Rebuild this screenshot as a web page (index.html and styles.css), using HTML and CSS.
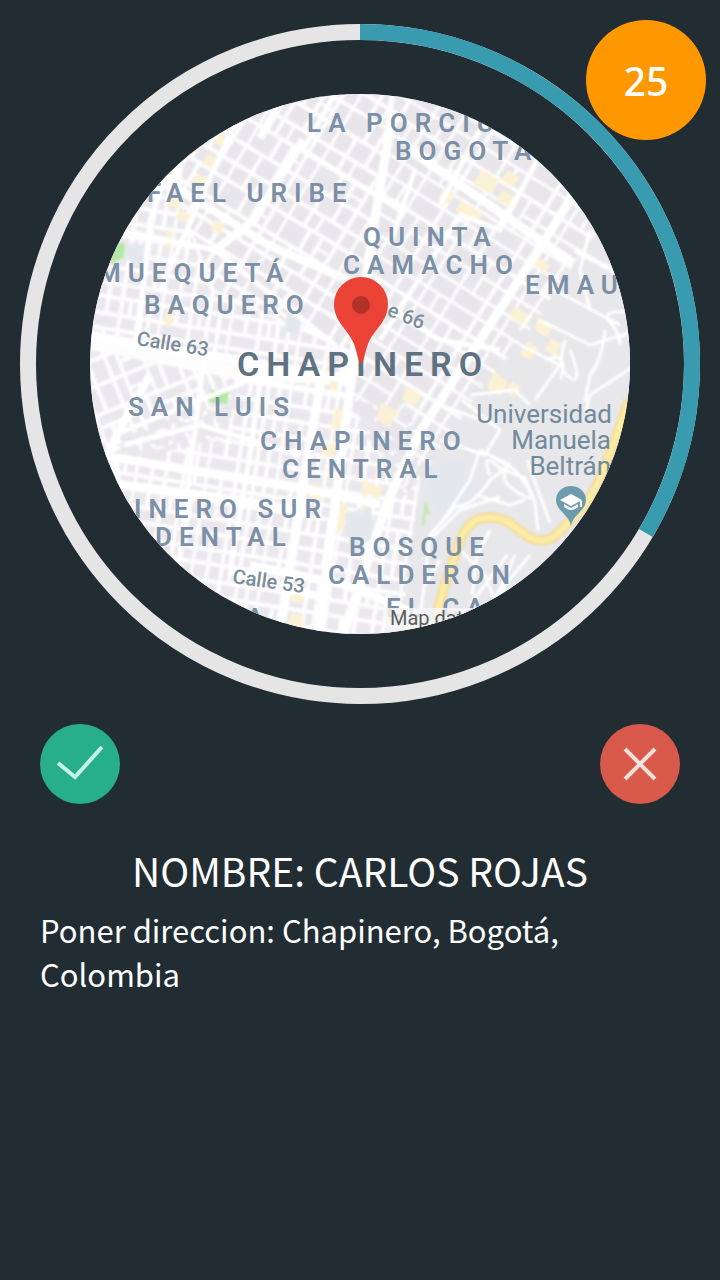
FILE: index.html
```html
<!DOCTYPE html>
<html lang="es">
<head>
<meta charset="utf-8">
<meta name="viewport" content="width=device-width, initial-scale=1">
<title>Solicitud de servicio</title>
<link rel="stylesheet" href="styles.css">
</head>
<body>
<main class="request">
  <section class="dial">
    <svg class="dial-graphic" viewBox="20 24 680 680" role="img" aria-label="Mapa de Chapinero">
      <defs>
        <clipPath id="map-clip"><circle cx="360" cy="364" r="270"/></clipPath>
        <pattern id="grid-nw" width="72" height="63" patternUnits="userSpaceOnUse" patternTransform="rotate(31)">
          <g fill="#e9e6eb"><path d="M0 0h15v17H0zM19 0h18v17H19zM41 0h12v17H41zM57 0h12v17H57zM0 21h15v14H0zM19 21h9v14h-9zM31 21h22v14H31zM57 21h12v14H57zM0 39h23v20H0zM27 39h10v20H27zM41 39h12v9H41zM41 51h12v8H41zM57 39h12v20H57z"/></g>
        </pattern>
        <pattern id="grid-w" width="70" height="62" patternUnits="userSpaceOnUse" patternTransform="rotate(9)">
          <g fill="#ebe8ed"><path d="M0 0h12v12H0zM16 0h10v12H16zM30 0h14v12H30zM48 0h7v12h-7zM59 0h8v12h-8zM0 16h12v10H0zM16 16h10v10H16zM30 16h14v10H30zM48 16h19v10H48zM0 30h12v13H0zM16 30h10v13H16zM30 30h5v13h-5zM39 30h5v13h-5zM48 30h7v13h-7zM59 30h8v13h-8zM0 47h26v11H0zM30 47h14v11H30zM48 47h7v11h-7zM59 47h8v11h-8z"/></g>
        </pattern>
        <pattern id="grid-e" width="86" height="74" patternUnits="userSpaceOnUse" patternTransform="rotate(32)">
          <g fill="#e8e6ea"><path d="M0 0h24v15H0zM27 0h28v15H27zM59 0h24v15H59zM0 18h11v16H0zM14 18h10v16H14zM27 18h28v16H27zM59 18h24v16H59zM0 38h24v14H0zM27 38h12v33H27zM42 38h13v14H42zM59 38h11v14H59zM73 38h10v14H73zM0 55h24v16H0zM42 55h13v16H42zM59 55h24v16H59z"/></g>
        </pattern>
        <pattern id="grid-sw" width="66" height="66" patternUnits="userSpaceOnUse" patternTransform="rotate(-22)">
          <g fill="#ebe8ed"><path d="M0 0h9v24H0zM13 0h14v24H13zM31 0h8v24h-8zM43 0h20v11H43zM43 14h20v10H43zM0 28h27v9H0zM31 28h8v9h-8zM43 28h8v20h-8zM55 28h8v20h-8zM0 41h9v21H0zM13 41h14v21H13zM31 41h8v21h-8zM43 52h20v10H43z"/></g>
        </pattern>
      </defs>

      <circle class="ring-track" cx="360" cy="364" r="332"/>
      <path class="ring-progress" d="M360 32A332 332 0 0 1 645.8 533"/>

      <g clip-path="url(#map-clip)">
        <rect x="90" y="94" width="540" height="540" fill="#fefdfe"/>
        <g class="streets">
          <path fill="url(#grid-nw)" d="M190 90H390L374 230L350 350L215 290L180 200Z"/>
          <path fill="url(#grid-w)" d="M90 190H176L210 290L345 350L335 382L90 330Z"/>
          <path fill="url(#grid-sw)" d="M90 350L240 380L225 440L120 460L90 470Z"/>
          <path fill="url(#grid-w)" d="M240 380L350 386L318 640H120V440Z"/>
          <path fill="url(#grid-w)" d="M330 400L410 400L440 640H310Z"/>
          <path fill="url(#grid-e)" d="M396 90H640V340L540 340L470 430L400 500L345 390L375 240Z"/>
          <path fill="#e8e7ea" d="M640 190V640H400L420 480L480 390L530 330L590 240Z"/>
          <path fill="#e3e8ec" d="M432 467L462 461L477 491L445 516L425 497ZM126 243L150 246L148 262L124 260ZM287 314L302 317L299 335L284 331ZM344 515L371 505L376 540L350 545Z"/>

          <g fill="#fbf2d6">
            <path d="M482 169L500 180L491 195L473 185ZM461 200L483 213L478 222L455 210ZM508 170L520 178L512 187L501 180ZM446 188L455 194L448 204L438 198ZM503 190L514 197L508 207L496 199ZM220 134L228 140L223 148L214 143ZM208 154L219 159L213 169L202 164ZM197 173L210 179L204 187L192 182ZM169 196L181 199L179 208L168 206Z"/>
            <path d="M167 230L174 231L171 249L165 247ZM154 264L160 265L158 283L152 281ZM166 310L174 311L172 326L164 325ZM178 210L194 216L189 223L176 219ZM215 220L226 225L220 235L211 229ZM514 306L532 317L526 327L509 317ZM538 317L553 326L547 338L535 330ZM551 338L562 344L556 357L545 350ZM527 342L540 349L530 360L520 354ZM538 257L550 266L545 273L532 264Z"/>
            <path d="M330 380L339 382L335 398L329 395ZM335 409L351 411L345 430L331 428ZM322 442L337 444L334 458L321 455ZM310 484L324 486L322 501L309 498ZM336 501L348 506L343 533L334 529ZM292 594L305 596L303 603L290 602ZM290 614L303 615L301 635L286 634ZM494 372L508 382L500 396L487 388ZM512 381L521 388L515 398L505 391ZM380 403L399 412L389 427L377 420ZM407 386L422 395L415 407L402 399ZM363 480L383 488L379 500L368 494L361 518Z"/>
          </g>
          <path fill="#b5e8a5" d="M111 243H125L124 257L110 264ZM211 390L229 392L227 404L208 402Z"/>

          <g class="road">
            <path stroke-width="9" d="M410 150L573 263M582 180L545 240L478 343L423 427L387 503L340 645M393 110L373 230L350 390L318 640M321 380L302 490L278 640"/>
            <path stroke-width="8" d="M180 190L270 246L375 292M303 140L254 220L215 250M300 70L260 138M90 336L240 360L345 378M100 455L200 472L310 490L380 505M90 480L240 500L310 512M250 565L345 585L420 615M150 375L117 434L104 466M230 570L330 600"/>
            <path stroke-width="5" d="M196 90L150 220L138 340M245 100L160 290M335 94L303 150L400 210M120 230L215 250L335 345M375 300L440 340L500 350M415 170L390 245M540 155L500 230L460 215L380 340M480 130L440 205M575 250L640 285M260 380L250 455L230 570M117 434L250 380L345 395M124 445L200 425L300 455M205 350L190 470L175 600"/>
          </g>
          <g class="road hills" stroke-width="3">
            <path d="M570 255L555 280L520 330M590 230L580 270L590 310M545 285L620 325M540 320L590 345L640 330M520 345L560 365L535 400M545 360Q570 350 560 379M565 340Q556 370 570 378T570 350M625 312Q600 310 610 322T620 345M640 362L590 395L586 412M605 330Q602 360 590 375L585 402"/>
            <path d="M470 395L515 390L530 405M462 400L500 430L485 455L440 440M440 405L478 419M490 455L510 465L490 480Q475 505 455 507L430 535L420 620M480 450L470 480L440 525M490 475Q480 450 500 468L525 478L535 502L538 530M510 463Q495 480 520 494T515 470L480 450M527 460L550 523M475 495L510 505L525 500M430 540L460 510L500 497M490 530L477 555L472 595M515 555L495 600M507 555L470 605M460 550L485 575L495 600M440 560L425 585M530 555L505 585L490 620"/>
          </g>
          <path class="highway-edge" d="M436 620L443 590L457 550Q463 528 476 520Q491 514 508 522L530 538Q545 544 555 536L574 517Q592 499 600 478L615 440L629 400"/>
          <path class="highway" d="M436 620L443 590L457 550Q463 528 476 520Q491 514 508 522L530 538Q545 544 555 536L574 517Q592 499 600 478L615 440L629 400"/>
          <path d="M426 503L423 525M427 508L429 515" fill="none" stroke="#b5e8a5" stroke-width="2"/>
        </g>

        <g class="district">
          <text x="307" y="132">LA PORCIÚN</text>
          <text x="395" y="160">BOGOTÁ</text>
          <text x="147" y="202">FAEL URIBE</text>
          <text x="363" y="246">QUINTA</text>
          <text x="343" y="274">CAMACHO</text>
          <text x="525" y="294">EMAUS</text>
          <text x="98" y="282">MUEQUETÁ</text>
          <text x="144" y="314">BAQUERO</text>
          <text x="128" y="416">SAN LUIS</text>
          <text x="260" y="450">CHAPINERO</text>
          <text x="282" y="478">CENTRAL</text>
          <text x="134" y="518">INERO SUR</text>
          <text x="155" y="546">DENTAL</text>
          <text x="349" y="556">BOSQUE</text>
          <text x="328" y="584">CALDERON</text>
          <text x="386" y="617">EL CA</text>
          <text x="246" y="627">A</text>
        </g>
        <text class="locality" x="237" y="376">CHAPINERO</text>

        <g class="street-name">
          <text transform="translate(136 345) rotate(9)">Calle 63</text>
          <text transform="translate(232 583) rotate(8)">Calle 53</text>
          <text transform="translate(386 315) rotate(22)">e 66</text>
        </g>
        <g class="poi">
          <text x="612" y="423">Universidad</text>
          <text x="611" y="449">Manuela</text>
          <text x="611" y="475">Beltrán</text>
        </g>
        <path fill="#6d9cae" d="M571 526C569 514 556 511 556 500A15 14 0 0 1 586 500C586 511 573 514 571 526Z"/>
        <path fill="#fff" d="M571 494L582 500L571 506L560 500ZM564 504V507Q571 513 578 507V504L571 508ZM580 501H582V507H580Z"/>

        <rect x="386" y="608" width="250" height="30" fill="#f4f4f5" opacity=".85"/>
        <text class="attribution" x="390" y="625">Map data</text>

        <path fill="#ea4335" d="M361 363C358 363 358 355 354 344C348 329 334 322 334 304A27 27 0 0 1 388 304C388 322 374 329 368 344C364 355 364 363 361 363Z"/>
        <circle cx="361" cy="305" r="9" fill="#b23128"/>
      </g>
    </svg>
    <span class="countdown">25</span>
  </section>

  <div class="actions">
    <button class="action accept" type="button" aria-label="Aceptar">
      <svg viewBox="0 0 80 80" aria-hidden="true"><path d="M18 39L35 53L62 23"/></svg>
    </button>
    <button class="action reject" type="button" aria-label="Rechazar">
      <svg viewBox="0 0 80 80" aria-hidden="true"><path d="M25 25L55 55M55 25L25 55"/></svg>
    </button>
  </div>

  <section class="details">
    <h1 class="name">NOMBRE: CARLOS ROJAS</h1>
    <p class="address">Poner direccion: Chapinero, Bogotá, Colombia</p>
  </section>
</main>
</body>
</html>
```

FILE: styles.css
```css
* {
  box-sizing: border-box;
}

body {
  margin: 0;
  min-height: 100vh;
  background: #222d33;
  color: #fff;
  font-family: "Noto Sans CJK SC", "Noto Sans", sans-serif;
}

.request {
  display: flex;
  flex-direction: column;
  gap: 20px;
  padding-top: 24px;
}

.dial {
  position: relative;
  padding: 0 20px;
}

.dial-graphic {
  display: block;
  width: 100%;
  height: auto;
}

.ring-track,
.ring-progress {
  fill: none;
  stroke: #e5e5e5;
  stroke-width: 16px;
}

.ring-progress {
  stroke: #389bb0;
}

.streets {
  filter: blur(1px);
}

.road {
  fill: none;
  stroke: #fff;
  stroke-linejoin: round;
}

.highway-edge,
.highway {
  fill: none;
  stroke: #f3dc98;
  stroke-width: 10px;
}

.highway {
  stroke: #fdeca6;
  stroke-width: 6px;
}

.district,
.locality,
.street-name,
.poi,
.attribution {
  font-family: Roboto, sans-serif;
}

.district {
  fill: #7b90a6;
  font-size: 26px;
  font-weight: 600;
  letter-spacing: 7px;
}

.locality {
  fill: #5f7281;
  font-size: 34px;
  font-weight: 600;
  letter-spacing: 7px;
}

.street-name {
  fill: #7b8c99;
  font-size: 20px;
  font-weight: 500;
}

.poi {
  fill: #708b9b;
  font-size: 26px;
  text-anchor: end;
}

.attribution {
  fill: #5c5c5c;
  font-size: 20px;
}

.countdown {
  position: absolute;
  top: -4px;
  right: 14px;
  display: flex;
  align-items: center;
  justify-content: center;
  width: 120px;
  height: 120px;
  border-radius: 50%;
  background: #ff9800;
  font-family: "Noto Sans", sans-serif;
  font-size: 39px;
  font-weight: 500;
}

.actions {
  display: flex;
  justify-content: space-between;
  padding: 0 40px;
}

.action {
  width: 80px;
  height: 80px;
  padding: 0;
  border: 0;
  border-radius: 50%;
}

.action svg {
  display: block;
  width: 100%;
  fill: none;
  stroke-width: 4px;
}

.accept {
  background: #27ae8a;
  stroke: #c4f5e4;
}

.reject {
  background: #d9594a;
  stroke: #fbe0dc;
}

.details {
  padding: 16px 40px;
}

.name {
  margin: 0;
  font-size: 39px;
  font-weight: 400;
  line-height: 60px;
  text-align: center;
}

.address {
  margin: 8px 0 0;
  font-size: 31px;
  line-height: 44px;
}
```
